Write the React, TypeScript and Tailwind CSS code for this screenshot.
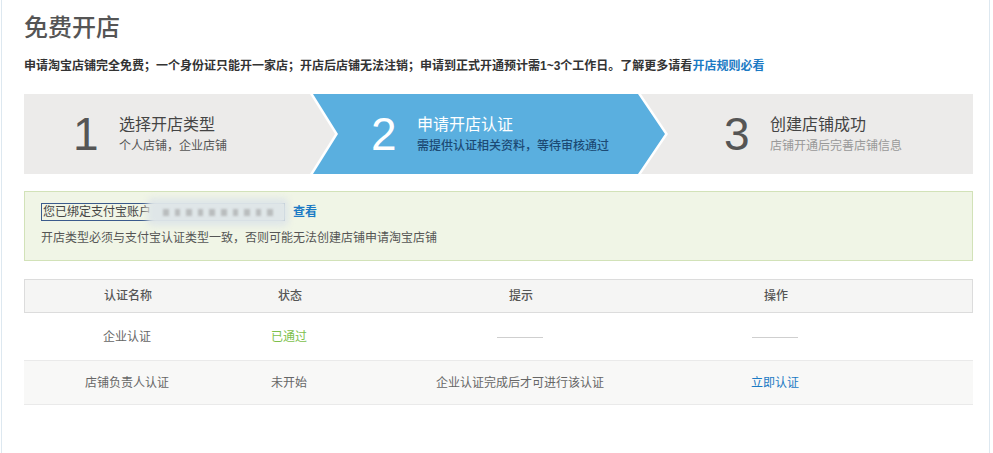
const font = "font-['Liberation_Sans','Noto_Sans_CJK_SC',sans-serif]";

const Dash = () => <span className="inline-block w-[46px] h-px bg-[#cfcfcf] align-middle" />;

const StepText = ({ num, title, sub, numCls, titleCls, subCls }: {
  num: string;
  title: string;
  sub: string;
  numCls: string;
  titleCls: string;
  subCls: string;
}) => (
  <div className="flex items-center h-full">
    <span className={`text-[46px] leading-none w-[46px] ${numCls}`}>{num}</span>
    <div className="flex flex-col">
      <span className={`text-[16px] leading-[20px] ${titleCls}`}>{title}</span>
      <span className={`text-[12px] leading-[16px] mt-[3px] ${subCls}`}>{sub}</span>
    </div>
  </div>
);

const Blurred = () => (
  <span className="relative inline-block align-middle w-[130px] h-[16px] ml-[2px]">
    <span className="absolute -inset-[6px] rounded-md bg-[#dfe6e8] blur-[3px]" />
    <span className="absolute inset-0 flex items-center gap-[6px] px-[10px] blur-[1px]">
      {[0, 1, 2, 3, 4, 5, 6, 7, 8, 9].map((i) => (
        <span key={i} className="w-[7px] h-[7px] bg-[#b9bdbe]" />
      ))}
    </span>
  </span>
);

export default function App() {
  return (
    <div className={`w-[993px] h-[453px] bg-white ${font}`}>
      <div className="ml-px w-[989px] h-full border-x border-[#dde8f0] pl-[22px] pt-[12px]">
        <h1 className="text-[24px] leading-[32px] text-[#555] font-medium">免费开店</h1>
        <p className="mt-[13px] text-[12px] leading-[18px] font-bold text-[#333]">
          申请淘宝店铺完全免费；一个身份证只能开一家店；开店后店铺无法注销；申请到正式开通预计需1~3个工作日。了解更多请看
          <span className="text-[#1b7ac4]">开店规则必看</span>
        </p>

        <div className="mt-[19px] w-[949px] h-[80px] bg-[#ecebea] flex">
          <div className="w-[289px] pl-[49px]">
            <StepText num="1" title="选择开店类型" sub="个人店铺，企业店铺" numCls="text-[#555]" titleCls="text-[#444]" subCls="text-[#555]" />
          </div>
          <div className="relative w-[325px] pl-[58px]">
            <svg className="absolute left-0 top-0 overflow-visible" width="352" height="80" viewBox="0 0 352 80">
              <polygon points="-3,0 328,0 355,40 328,80 -3,80 22,40" fill="#ffffff" />
              <polygon points="0,0 325,0 352,40 325,80 0,80 25,40" fill="#5aafdf" />
            </svg>
            <div className="relative h-full">
              <StepText num="2" title="申请开店认证" sub="需提供认证相关资料，等待审核通过" numCls="text-white" titleCls="text-white" subCls="text-[#1c4a74] font-medium" />
            </div>
          </div>
          <div className="flex-1 pl-[86px]">
            <StepText num="3" title="创建店铺成功" sub="店铺开通后完善店铺信息" numCls="text-[#555]" titleCls="text-[#444]" subCls="text-[#999]" />
          </div>
        </div>

        <div className="mt-[17px] w-[949px] h-[70px] bg-[#f0f5e6] border border-[#d2e2b8] pl-[16px] pt-[10px] text-[12px] text-[#555]">
          <div className="flex items-center h-[20px]">
            <span className="border border-[#3b5b8c] px-px leading-[14px] text-[#444] flex items-center">
              您已绑定支付宝账户
              <Blurred />
            </span>
            <span className="ml-[8px] text-[#1b7ac4] font-bold">查看</span>
          </div>
          <div className="mt-[7px] leading-[18px]">开店类型必须与支付宝认证类型一致，否则可能无法创建店铺申请淘宝店铺</div>
        </div>

        <div className="mt-[18px] w-[949px] text-[12px] text-center">
          <div className="grid grid-cols-[206px_118px_344px_166px_1fr] h-[34px] items-center bg-[#f5f5f4] border border-[#dcdcdc] text-[#555] font-medium">
            <span>认证名称</span>
            <span>状态</span>
            <span>提示</span>
            <span>操作</span>
            <span />
          </div>
          <div className="grid grid-cols-[206px_118px_344px_166px_1fr] h-[48px] items-center border-b border-[#eaeaea] text-[#666]">
            <span>企业认证</span>
            <span className="text-[#7dbf4c]">已通过</span>
            <span><Dash /></span>
            <span><Dash /></span>
            <span />
          </div>
          <div className="grid grid-cols-[206px_118px_344px_166px_1fr] h-[44px] items-center bg-[#f8f8f7] border-b border-[#eaeaea] text-[#666]">
            <span>店铺负责人认证</span>
            <span>未开始</span>
            <span>企业认证完成后才可进行该认证</span>
            <span className="text-[#1b7ac4]">立即认证</span>
            <span />
          </div>
        </div>
      </div>
    </div>
  );
}
